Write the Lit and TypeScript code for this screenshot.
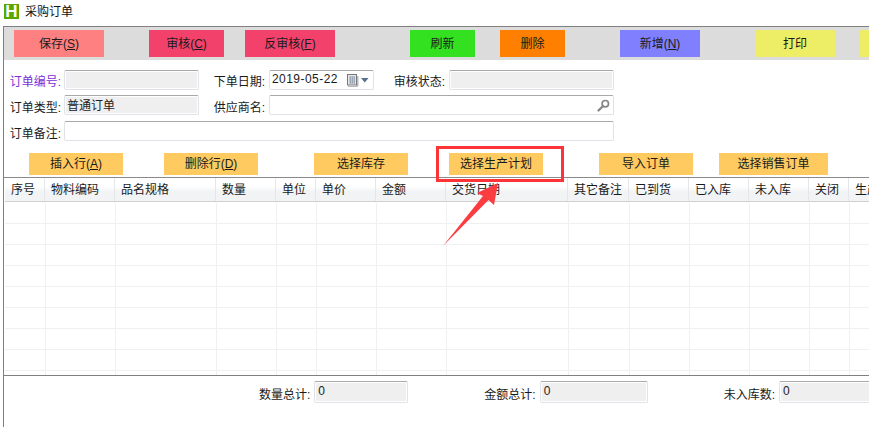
import { LitElement, html, css, svg } from "lit";
import { customElement } from "lit/decorators.js";

const COLS = [
  ["序号", 41], ["物料编码", 70], ["品名规格", 101], ["数量", 60], ["单位", 40], ["单价", 60],
  ["金额", 70], ["交货日期", 122], ["其它备注", 61], ["已到货", 60], ["已入库", 60], ["未入库", 60], ["关闭", 40], ["生产", 60],
] as const;
const ROWS = Array.from({ length: 9 });

@customElement("app-root")
export class AppRoot extends LitElement {
  static styles = css`
    :host {
      display: block;
      position: relative;
      width: 869px;
      height: 427px;
      overflow: hidden;
      background: #fff;
      color: #1a1a1a;
      font: 12px/16px "Liberation Sans", "Noto Sans CJK SC", sans-serif;
    }
    .title { height: 26px; box-sizing: border-box; display: flex; align-items: flex-start; gap: 6px; padding: 4px 0 0 4px; color: #111; }
    .logo { width: 15px; height: 15px; background: #5aa700; color: #fff; font: bold 17px/15px "Liberation Sans", sans-serif; text-align: center; }
    .frame { margin-left: 3px; height: 401px; border-left: 1px solid #808080; border-top: 1px solid #808080; box-sizing: border-box; display: flex; flex-direction: column; }
    .toolbar { height: 33px; flex: none; background: #dcdcdc; display: flex; align-items: center; overflow: hidden; box-sizing: border-box; padding: 3px 0 3px 10px; }
    .toolbar > div { height: 27px; flex: none; display: flex; align-items: center; justify-content: center; }
    .save { width: 90px; background: #ff8080; }
    .audit { width: 75px; margin-left: 45px; background: #f2426b; }
    .unaudit { width: 90px; margin-left: 21px; background: #f2426b; }
    .refresh { width: 65px; margin-left: 75px; background: #33e121; }
    .del { width: 65px; margin-left: 25px; background: #ff8000; }
    .add { width: 80px; margin-left: 55px; background: #8080ff; }
    .print { width: 80px; margin-left: 55px; background: #eded66; }
    .more { width: 80px; margin-left: 25px; background: #eded66; }
    u { text-underline-offset: 1px; }

    .form { display: grid; grid-template-columns: 60px 135px 70px 105px 75px 165px; grid-template-rows: 20px 20px 21px; row-gap: 5px; width: 610px; padding-top: 10px; height: 71px; flex: none; align-content: start; }
    .lab { display: flex; align-items: center; justify-content: flex-end; padding-right: 3px; white-space: nowrap; position: relative; top: 2px; }
    .lab.low { top: 3px; }
    .lab.purple { color: #7b2fd6; }
    .w2 { grid-column: 4 / 7; }
    .w5 { grid-column: 2 / 7; height: 20px; align-self: end; }
    .lab2 { padding-right: 4px; }
    .inp { box-sizing: border-box; border: 1px solid #dfe3e8; border-top-color: #a9a9a9; border-radius: 2px; display: flex; align-items: center; padding-left: 2px; position: relative; background: #fff; }
    .ro { background: #efefef; box-shadow: inset 0 0 0 1px #fff; color: #222; }
    .ro span { position: relative; top: 1px; }
    .inp svg { flex: none; }
    .date { justify-content: space-between; padding-right: 4px; }
    .date > span:first-child { letter-spacing: 0.45px; position: relative; top: -1px; }
    .date .icons { display: flex; align-items: center; gap: 2px; }
    .search { justify-content: flex-end; padding-right: 3px; }

    .btns { display: flex; height: 22px; flex: none; margin-top: 12px; }
    .btns > div { height: 22px; flex: none; background: #ffca60; display: flex; align-items: center; justify-content: center; }
    .b1 { width: 94px; margin-left: 25px; }
    .b2 { width: 94px; margin-left: 41px; }
    .b3 { width: 94px; margin-left: 56px; }
    .b4 { width: 94px; margin-left: 41px; }
    .b5 { width: 94px; margin-left: 56px; }
    .b6 { width: 109px; margin-left: 26px; }

    .grid { margin-top: 2px; height: 197px; flex: none; border-top: 1px solid #8a8a8a; border-bottom: 1px solid #808080; overflow: hidden; }
    .head { display: flex; height: 23px; margin: 0 0 1px 1px; border-bottom: 1px solid #d0d0d0; background: linear-gradient(#fff 0, #fff 35%, #f1f3f5 60%, #f1f3f5 100%); }
    .head > div { flex: none; box-sizing: border-box; padding-left: 6px; border-right: 1px solid #e4e6e8; display: flex; align-items: center; white-space: nowrap; overflow: hidden; }
    .row { display: flex; height: 21px; margin-left: 1px; box-sizing: border-box; border-bottom: 1px solid #eff0f2; }
    .row > div { flex: none; box-sizing: border-box; border-right: 1px solid #eff0f2; }

    .foot { display: flex; align-items: flex-start; padding-top: 5px; flex: none; }
    .foot .flab { margin-top: 6px; padding-right: 4px; white-space: nowrap; }
    .foot .inp { height: 22px; align-items: flex-start; padding-left: 3px; flex: none; }
    .f1 { margin-left: 255px; }
    .f2 { margin-left: 76px; }
    .f3 { margin-left: 76px; }
    .i1 { width: 94px; }
    .i2 { width: 108px; }
    .i3 { width: 100px; }

    .note { position: absolute; left: 0; top: 0; pointer-events: none; }
  `;

  render() {
    return html`
      <div class="title">
        <div class="logo">H</div>
        <div>采购订单</div>
      </div>
      <div class="frame">
        <div class="toolbar">
          <div class="save">保存(<u>S</u>)</div>
          <div class="audit">审核(<u>C</u>)</div>
          <div class="unaudit">反审核(<u>F</u>)</div>
          <div class="refresh">刷新</div>
          <div class="del">删除</div>
          <div class="add">新增(<u>N</u>)</div>
          <div class="print">打印</div>
          <div class="more"></div>
        </div>

        <div class="form">
          <div class="lab purple">订单编号:</div>
          <div class="inp ro"></div>
          <div class="lab lab2">下单日期:</div>
          <div class="inp date">
            <span>2019-05-22</span>
            <span class="icons">
              <svg width="12" height="13" viewBox="0 0 12 13">
                <rect x="0.5" y="0.5" width="9" height="10.5" fill="#e8e8e8" stroke="#777"/>
                <rect x="10" y="2" width="1.5" height="10" fill="#bbb"/>
                <rect x="1" y="11.5" width="10" height="1.5" fill="#bbb"/>
                <path d="M2 3h6M2 5h6M2 7h6M2 9h6M3.500 2.500v7M5.500 2.500v7M7.500 2.500v7" stroke="#9aa5b5" stroke-width="1"/>
              </svg>
              <svg width="8" height="5" viewBox="0 0 8 5"><path d="M0 0h7.500L3.750 4.500z" fill="#58708c"/></svg>
            </span>
          </div>
          <div class="lab lab2">审核状态:</div>
          <div class="inp ro"></div>

          <div class="lab low">订单类型:</div>
          <div class="inp ro"><span>普通订单</span></div>
          <div class="lab lab2 low">供应商名:</div>
          <div class="inp w2 search">
            <svg width="13" height="13" viewBox="0 0 13 13">
              <circle cx="8.300" cy="4.700" r="3.200" fill="none" stroke="#858585" stroke-width="1.700"/>
              <path d="M5.800 7.200L1.500 11.500" stroke="#858585" stroke-width="2.200" stroke-linecap="round"/>
            </svg>
          </div>

          <div class="lab low">订单备注:</div>
          <div class="inp w5"></div>
        </div>

        <div class="btns">
          <div class="b1">插入行(<u>A</u>)</div>
          <div class="b2">删除行(<u>D</u>)</div>
          <div class="b3">选择库存</div>
          <div class="b4">选择生产计划</div>
          <div class="b5">导入订单</div>
          <div class="b6">选择销售订单</div>
        </div>

        <div class="grid">
          <div class="head">
            ${COLS.map(([t, w], i) => html`<div style="width:${i === 0 ? w - 1 : w}px">${t}</div>`)}
          </div>
          ${ROWS.map(() => html`<div class="row">${COLS.map(([, w]) => html`<div style="width:${w}px"></div>`)}</div>`)}
        </div>

        <div class="foot">
          <div class="flab f1">数量总计:</div>
          <div class="inp ro i1"><span>0</span></div>
          <div class="flab f2">金额总计:</div>
          <div class="inp ro i2"><span>0</span></div>
          <div class="flab f3">未入库数:</div>
          <div class="inp ro i3"><span>0</span></div>
        </div>
      </div>

      <svg class="note" width="869" height="427" viewBox="0 0 869 427">
        ${svg`<rect x="437.500" y="147.500" width="125" height="33" fill="none" stroke="#fb3438" stroke-width="3"/>
        <path d="M498 183L494 205L488.500 200L443 246L483 196L477 193Z" fill="#fb3c40"/>`}
      </svg>
    `;
  }
}
